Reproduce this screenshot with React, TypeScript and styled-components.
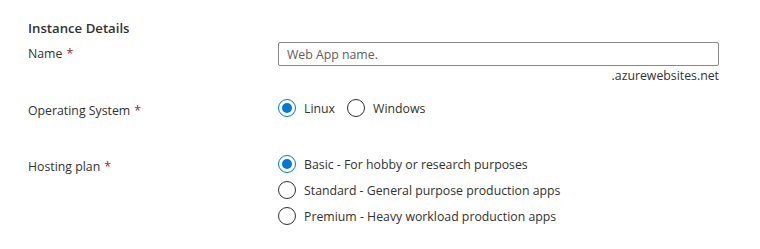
import React from "react";
import styled, { createGlobalStyle } from "styled-components";

const Global = createGlobalStyle`
  html, body { margin: 0; padding: 0; background: #ffffff; }
  body { font-family: "Open Sans", "Noto Sans", sans-serif; color: #323130; }
`;

const Page = styled.div`
  width: 760px;
  box-sizing: border-box;
  padding: 18px 41px 0 28px;
  display: flex;
  flex-direction: column;
`;

const Heading = styled.h2`
  margin: 0;
  font-size: 13.2px;
  font-weight: 600;
  line-height: 20px;
  color: #323130;
`;

const Row = styled.div<{ $mt: number }>`
  display: flex;
  align-items: flex-start;
  margin-top: ${(p) => p.$mt}px;
`;

const Label = styled.div<{ $lh: number; $pt?: number }>`
  width: 250px;
  flex: none;
  font-size: 12.3px;
  line-height: ${(p) => p.$lh}px;
  padding-top: ${(p) => p.$pt ?? 0}px;
  color: #323130;
`;

const Req = styled.span`
  color: #a4262c;
  margin-left: 4px;
`;

const Field = styled.div`
  flex: 1;
  display: flex;
  flex-direction: column;
`;

const Input = styled.input`
  box-sizing: border-box;
  height: 24px;
  width: 100%;
  border: 1px solid #8a8886;
  border-radius: 2px;
  padding: 0 8px;
  font-family: inherit;
  font-size: 12.3px;
  color: #323130;
  outline: none;
  &::placeholder { color: #605e5c; }
`;

const Suffix = styled.div`
  align-self: flex-end;
  font-size: 12.3px;
  line-height: 20px;
  color: #323130;
`;

const Group = styled.div<{ $dir: "row" | "column" }>`
  display: flex;
  flex-direction: ${(p) => p.$dir};
  gap: ${(p) => (p.$dir === "row" ? 12 : 6)}px;
`;

const Option = styled.label`
  display: flex;
  align-items: center;
  gap: 8px;
  height: 20px;
  font-size: 12.3px;
  color: #323130;
  cursor: pointer;
`;

const Circle = styled.span<{ $on: boolean }>`
  box-sizing: border-box;
  width: 18px;
  height: 18px;
  border-radius: 50%;
  border: 1px solid ${(p) => (p.$on ? "#0078d4" : "#323130")};
  display: flex;
  align-items: center;
  justify-content: center;
  flex: none;
  &::after {
    content: "";
    width: 10px;
    height: 10px;
    border-radius: 50%;
    background: ${(p) => (p.$on ? "#0078d4" : "transparent")};
  }
`;

const Radio = ({ on, children }: { on: boolean; children: React.ReactNode }) => (
  <Option>
    <Circle $on={on} />
    <span>{children}</span>
  </Option>
);

export default function App() {
  return (
    <>
      <Global />
      <Page>
        <Heading>Instance Details</Heading>
        <Row $mt={4}>
          <Label $lh={24}>
            Name<Req>*</Req>
          </Label>
          <Field>
            <Input placeholder="Web App name." />
            <Suffix>.azurewebsites.net</Suffix>
          </Field>
        </Row>
        <Row $mt={12}>
          <Label $lh={20} $pt={3}>
            Operating System<Req>*</Req>
          </Label>
          <Group $dir="row">
            <Radio on>Linux</Radio>
            <Radio on={false}>Windows</Radio>
          </Group>
        </Row>
        <Row $mt={33}>
          <Label $lh={20} $pt={3}>
            Hosting plan<Req>*</Req>
          </Label>
          <Group $dir="column">
            <Radio on>Basic - For hobby or research purposes</Radio>
            <Radio on={false}>Standard - General purpose production apps</Radio>
            <Radio on={false}>Premium - Heavy workload production apps</Radio>
          </Group>
        </Row>
      </Page>
    </>
  );
}
